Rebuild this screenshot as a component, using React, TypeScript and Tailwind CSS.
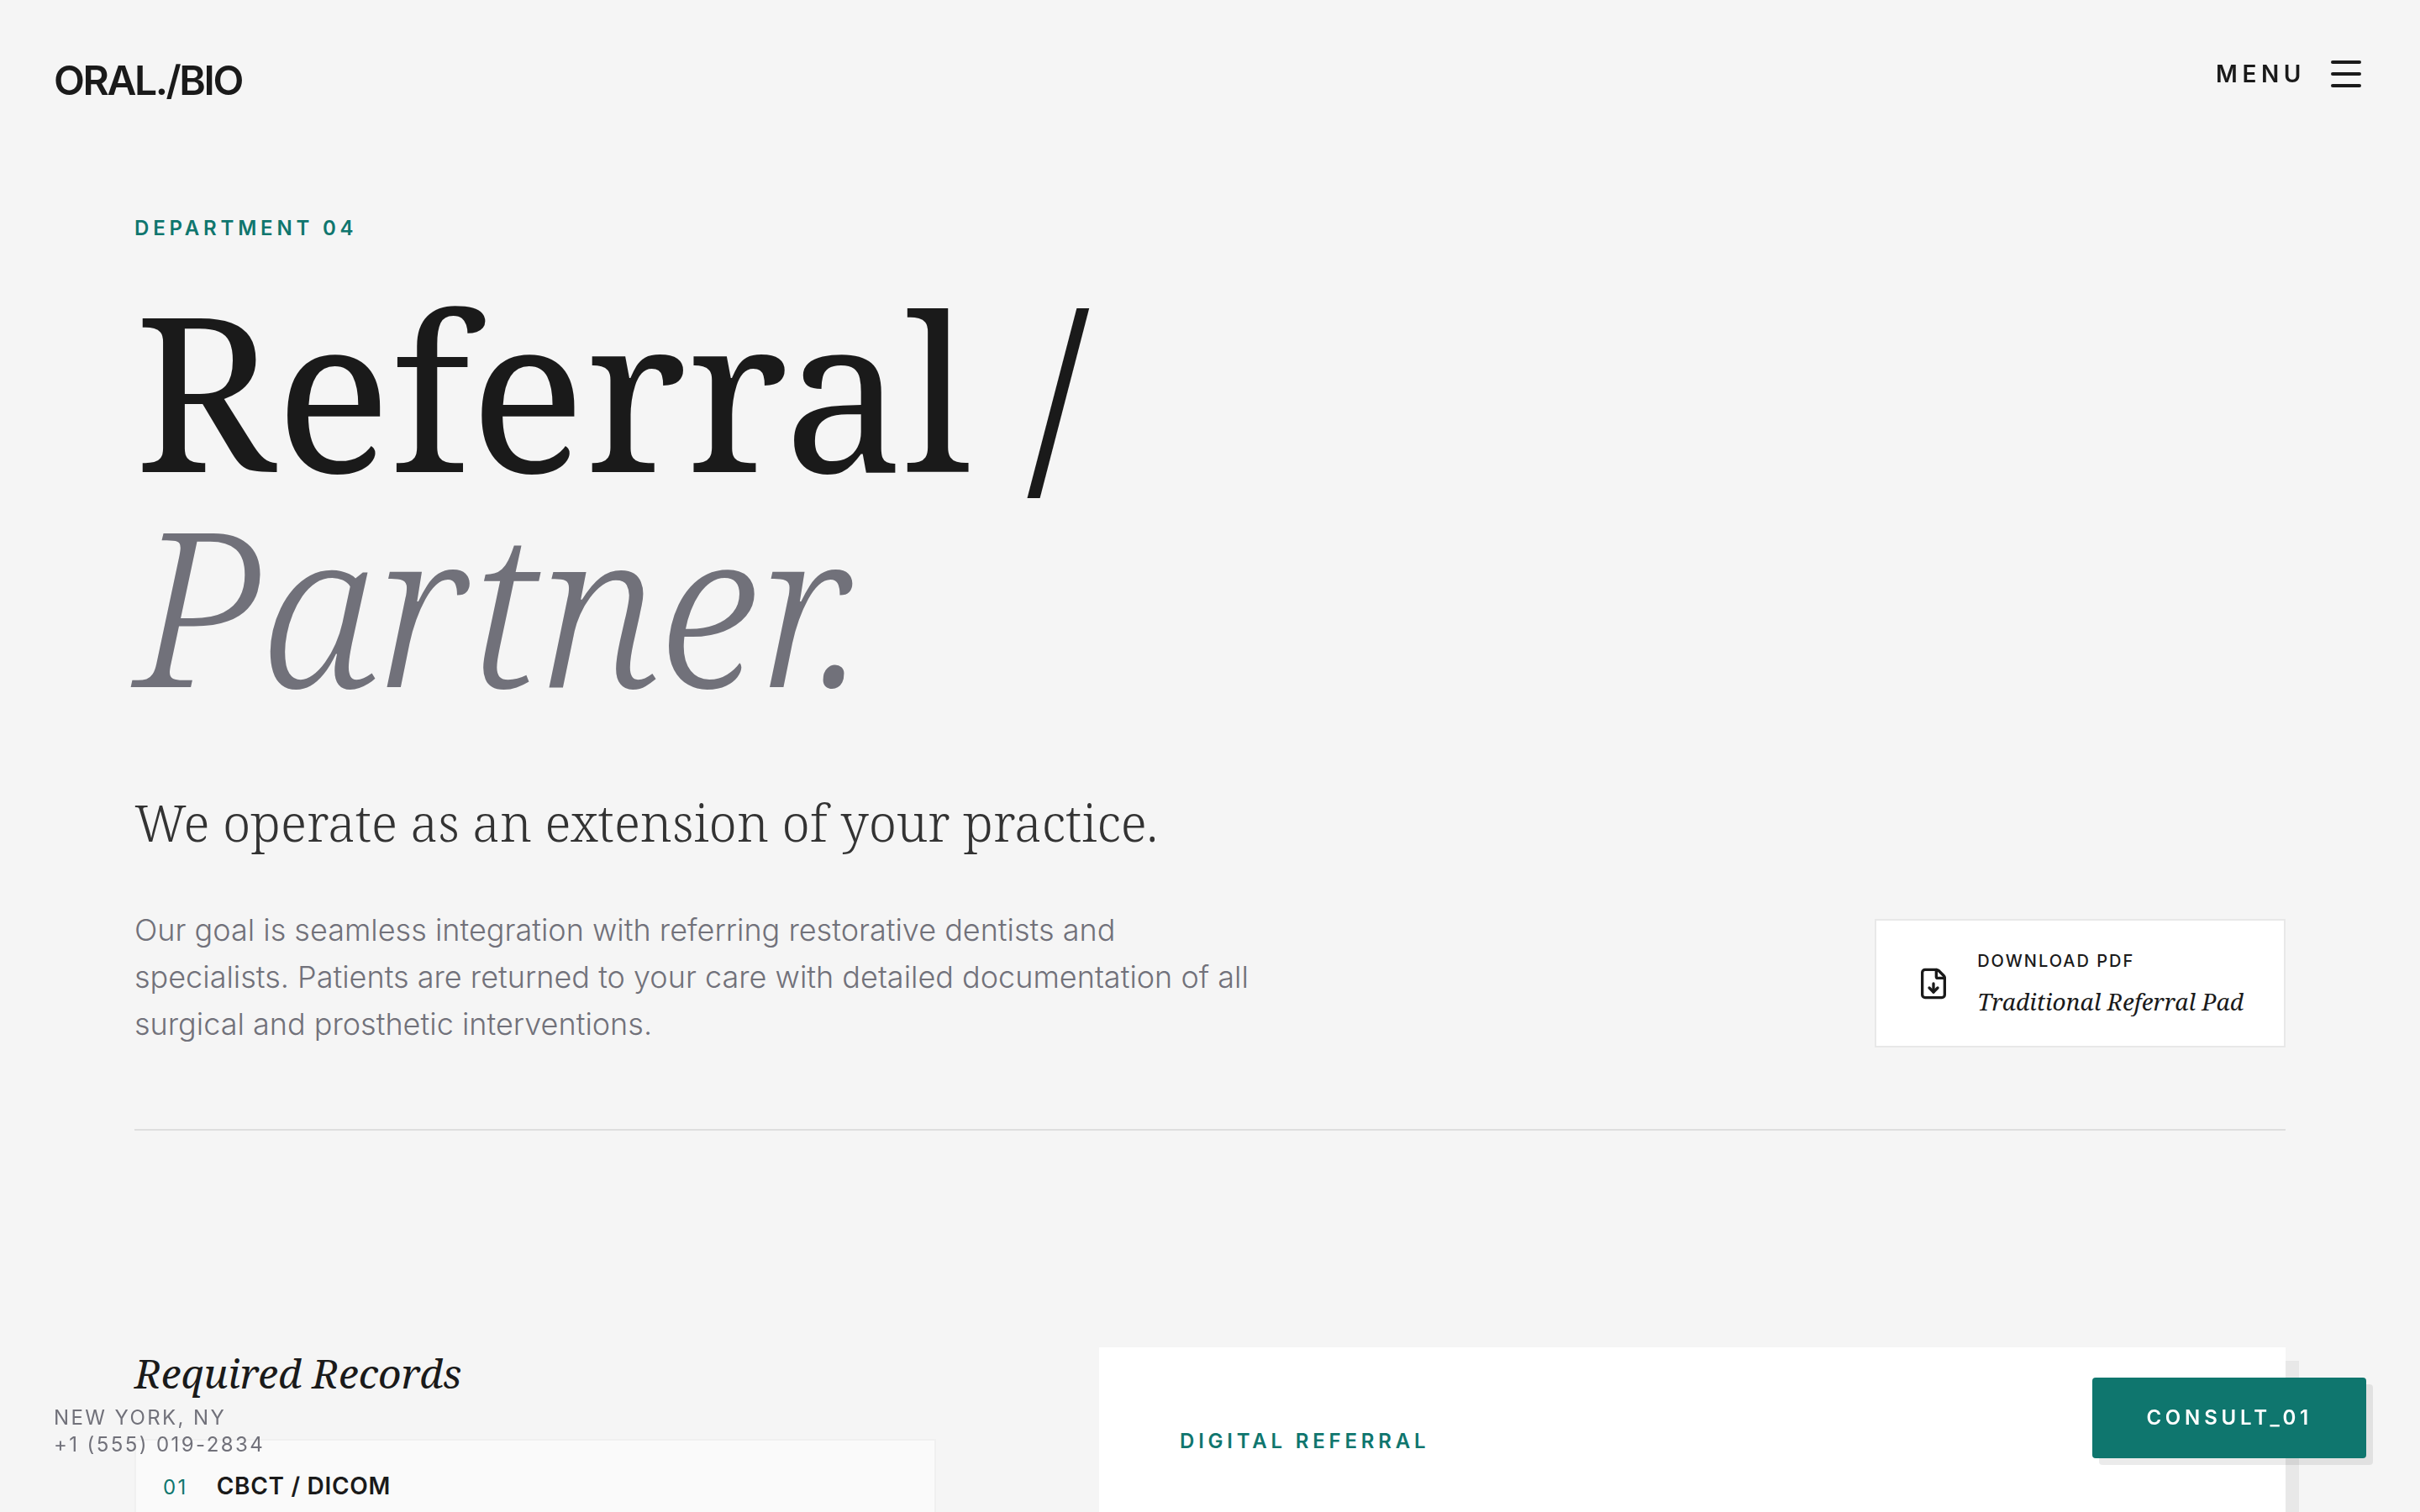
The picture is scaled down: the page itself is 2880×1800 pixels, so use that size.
import { Menu, FileDown } from "lucide-react";

const sans = "font-['Inter',sans-serif]";
const serif = "font-['Noto_Serif','Liberation_Serif',serif]";

export default function App() {
  return (
    <div className={`h-screen overflow-hidden bg-[#f5f5f5] text-[#1a1a1a] ${sans}`}>
      <header className="fixed top-0 left-0 right-0 z-20 flex items-start justify-between px-16 pt-16">
        <div className="text-5xl leading-[64px] font-semibold tracking-[-0.05em] text-[#1a1a1a]">ORAL./BIO</div>
        <div className="flex items-center gap-6">
          <span className="text-[28px] leading-10 font-semibold tracking-[0.2em]">MENU</span>
          <Menu size={48} strokeWidth={2} />
        </div>
      </header>

      <main className="px-40 pt-[256px]">
        <p className="text-2xl leading-8 font-semibold tracking-[0.2em] text-[#0f766e]">DEPARTMENT 04</p>
        <h1 className={`${serif} mt-[47px] text-[256px] leading-[256px] font-normal`}>
          Referral /
          <br />
          <span className="italic font-light text-[#71717a]">Partner.</span>
        </h1>
        <h2 className={`${serif} mt-[92px] text-[60px] leading-[80px] font-light text-[#333333]`}>
          We operate as an extension of your practice.
        </h2>
        <div className="mt-[60px] flex items-end justify-between border-b-2 border-[#dedede] pb-[97px]">
          <p className="w-[1344px] text-4xl leading-[56px] font-light text-[#71717a]">
            Our goal is seamless integration with referring restorative dentists and specialists. Patients are returned to your care with detailed documentation of all surgical and prosthetic interventions.
          </p>
          <a className="flex h-[153px] shrink-0 items-center gap-8 border-2 border-[#e8e8e8] bg-white px-12">
            <FileDown size={40} strokeWidth={2} />
            <span className="flex flex-col gap-[14px] whitespace-nowrap">
              <span className="text-xl leading-7 font-medium tracking-[0.1em]">DOWNLOAD PDF</span>
              <span className={`${serif} text-[28px] leading-10 italic`}>Traditional Referral Pad</span>
            </span>
          </a>
        </div>

        <section className="mt-[258px] grid grid-cols-[954px_1412px] gap-[194px]">
          <div>
            <h3 className={`${serif} mb-[46px] text-5xl leading-[64px] italic -mt-[1px]`}>Required Records</h3>
            <div className="min-h-[600px] border-2 border-[#f0f0f0] bg-[#fafafa] px-8 pt-[34px] pb-8">
              <div className="flex items-baseline gap-[34px]">
                <span className="text-2xl leading-10 tracking-[0.1em] text-[#0f766e]">01</span>
                <span className="text-[28px] leading-10 font-semibold tracking-[0.025em]">CBCT / DICOM</span>
              </div>
            </div>
          </div>
          <div className="min-h-[800px] bg-white p-24 shadow-[16px_16px_0_rgba(0,0,0,0.05)]">
            <p className="text-2xl leading-8 font-semibold tracking-[0.2em] text-[#0f766e]">DIGITAL REFERRAL</p>
          </div>
        </section>
      </main>

      <div className="fixed bottom-[64px] left-16 z-20 text-2xl leading-8 font-normal tracking-[0.1em] text-[#71717a]">
        <p>NEW YORK, NY</p>
        <p>+1 (555) 019-2834</p>
      </div>
      <button className="fixed right-16 bottom-16 z-20 rounded-[4px] bg-[#0f766e] px-16 py-8 text-2xl leading-8 font-semibold tracking-[0.2em] text-white shadow-[8px_8px_0_rgba(0,0,0,0.08)]">
        CONSULT_01
      </button>
    </div>
  );
}
